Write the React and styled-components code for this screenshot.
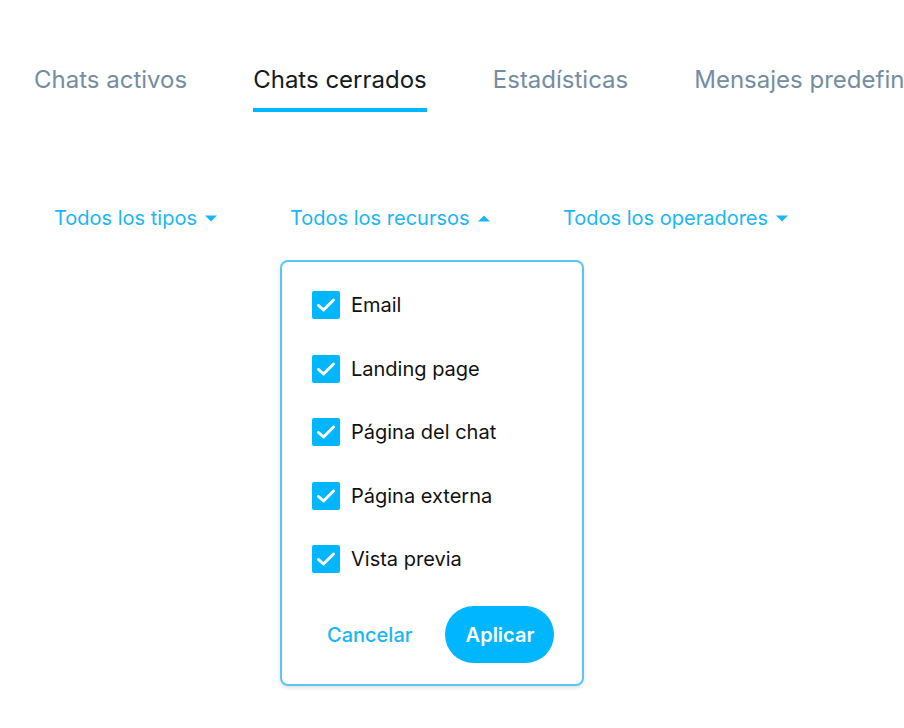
import React, { useState } from "react";
import styled, { createGlobalStyle } from "styled-components";

const Global = createGlobalStyle`
  html, body { margin: 0; padding: 0; background: #fff; }
  body { font-family: Inter, "Noto Sans", "Liberation Sans", sans-serif; -webkit-font-smoothing: antialiased; }
  * { box-sizing: border-box; }
`;

const Page = styled.div`
  width: 904px;
  height: 728px;
  overflow: hidden;
  padding-top: 62px;
`;

const TabBar = styled.nav`
  display: flex;
  gap: 66px;
  padding-left: 34px;
  white-space: nowrap;
`;

const Tab = styled.div`
  font-size: 24px;
  line-height: 36px;
  color: ${(p) => (p.$active ? "#141a22" : "#758da0")};
  padding-bottom: 10px;
  border-bottom: 4px solid ${(p) => (p.$active ? "#00b6ff" : "transparent")};
  flex-shrink: 0;
`;

const FilterRow = styled.div`
  display: flex;
  margin-top: 91px;
  padding-left: 54px;
`;

const FilterCol = styled.div`
  width: ${(p) => p.$w}px;
  display: flex;
  flex-direction: column;
  align-items: flex-start;
`;

const FilterButton = styled.button`
  border: none;
  background: none;
  padding: 0;
  font: inherit;
  font-size: 20px;
  line-height: 30px;
  color: #1ab6f5;
  display: flex;
  align-items: center;
  gap: 8px;
  cursor: pointer;
`;

const Caret = styled.svg`
  width: 12px;
  height: 7px;
  display: block;
`;

const Menu = styled.div`
  margin-top: 27px;
  margin-left: -10px;
  width: 304px;
  border: 2px solid #5ac6f6;
  border-radius: 8px;
  box-shadow: 0 2px 4px rgba(0, 0, 0, 0.12);
  background: #fff;
  padding: 29px 0 21px 30px;
`;

const OptionList = styled.div`
  display: flex;
  flex-direction: column;
  gap: 35.5px;
`;

const Option = styled.label`
  display: flex;
  align-items: center;
  gap: 11px;
  font-size: 20px;
  color: #111;
  line-height: 28px;
  cursor: pointer;
`;

const Box = styled.span`
  width: 28px;
  height: 28px;
  border-radius: 2px;
  background: ${(p) => (p.$on ? "#00b6ff" : "#fff")};
  border: ${(p) => (p.$on ? "none" : "2px solid #00b6ff")};
  display: flex;
  align-items: center;
  justify-content: center;
`;

const Actions = styled.div`
  display: flex;
  align-items: center;
  gap: 33px;
  margin-top: 33px;
  padding-left: 15px;
`;

const Cancel = styled.button`
  border: none;
  background: none;
  padding: 0;
  font: inherit;
  font-size: 20px;
  font-weight: 500;
  color: #1ab6f5;
  cursor: pointer;
`;

const Apply = styled.button`
  border: none;
  background: #00b6ff;
  color: #fff;
  font: inherit;
  font-size: 20px;
  font-weight: 600;
  height: 57px;
  width: 109px;
  border-radius: 29px;
  cursor: pointer;
`;

const Down = () => (
  <Caret viewBox="0 0 12 7">
    <path d="M0 0.5 L12 0.5 L6 6.5 Z" fill="#1ab6f5" />
  </Caret>
);
const Up = () => (
  <Caret viewBox="0 0 12 7">
    <path d="M0 6.5 L12 6.5 L6 0.5 Z" fill="#1ab6f5" />
  </Caret>
);

const Check = () => (
  <svg width="20" height="16" viewBox="0 0 20 16">
    <path d="M2.5 8.5 L7.5 13 L17.5 3" stroke="#fff" strokeWidth="3" fill="none" strokeLinecap="round" strokeLinejoin="round" />
  </svg>
);

const options = ["Email", "Landing page", "Página del chat", "Página externa", "Vista previa"];

export default function App() {
  const [checked, setChecked] = useState(options.map(() => true));
  return (
    <Page>
      <Global />
      <TabBar>
        <Tab>Chats activos</Tab>
        <Tab $active>Chats cerrados</Tab>
        <Tab>Estadísticas</Tab>
        <Tab>Mensajes predefinidos</Tab>
      </TabBar>
      <FilterRow>
        <FilterCol $w={236}>
          <FilterButton>Todos los tipos <Down /></FilterButton>
        </FilterCol>
        <FilterCol $w={273}>
          <FilterButton>Todos los recursos <Up /></FilterButton>
          <Menu>
            <OptionList>
              {options.map((o, i) => (
                <Option
                  key={o}
                  onClick={() => setChecked(checked.map((c, j) => (j === i ? !c : c)))}
                >
                  <Box $on={checked[i]}>{checked[i] && <Check />}</Box>
                  {o}
                </Option>
              ))}
            </OptionList>
            <Actions>
              <Cancel>Cancelar</Cancel>
              <Apply>Aplicar</Apply>
            </Actions>
          </Menu>
        </FilterCol>
        <FilterCol $w={260}>
          <FilterButton>Todos los operadores <Down /></FilterButton>
        </FilterCol>
      </FilterRow>
    </Page>
  );
}
